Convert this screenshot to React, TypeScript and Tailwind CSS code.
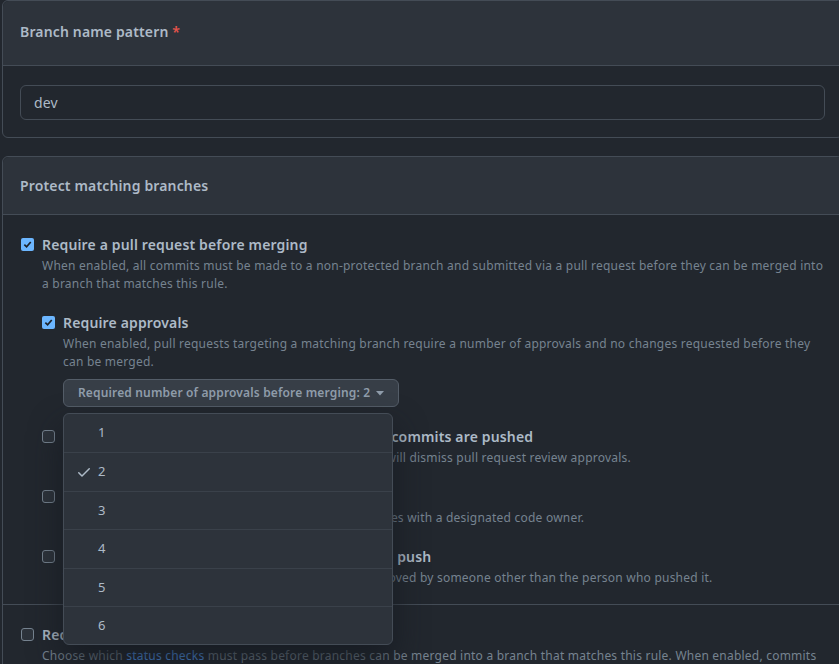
import React from 'react';

const font = { fontFamily: '"Segoe UI", "Noto Sans", "Liberation Sans", sans-serif' };

const Check = ({ size = 16, className = '' }: { size?: number; className?: string }) => (
  <svg width={size} height={size} viewBox="0 0 16 16" className={className} fill="currentColor">
    <path d="M13.78 4.22a.75.75 0 0 1 0 1.06l-7.25 7.25a.75.75 0 0 1-1.06 0L2.22 9.28a.751.751 0 0 1 .018-1.042.751.751 0 0 1 1.042-.018L6 10.94l6.72-6.72a.75.75 0 0 1 1.06 0Z" />
  </svg>
);

const Box = ({ checked }: { checked?: boolean }) =>
  checked ? (
    <span className="mt-[4px] flex h-[13px] w-[13px] shrink-0 items-center justify-center rounded-[2px] bg-[#6cb6ff] text-[#1c2128]">
      <svg width="9" height="9" viewBox="0 0 10 10" fill="none">
        <path d="M1.5 5.2 4 7.6 8.6 2.2" stroke="currentColor" strokeWidth="1.9" />
      </svg>
    </span>
  ) : (
    <span className="mt-[4px] h-[13px] w-[13px] shrink-0 rounded-[3px] border border-[#768390] bg-[#2d333b]" />
  );

interface OptionProps {
  title: string;
  desc: React.ReactNode;
  checked?: boolean;
  children?: React.ReactNode;
}

const Option = ({ title, desc, checked, children }: OptionProps) => (
  <div className="flex gap-[8px]">
    <Box checked={checked} />
    <div className="min-w-0 flex-1">
      <div className="text-[14px] font-semibold leading-[21px] text-[#adbac7]">{title}</div>
      <p className="mt-[2px] text-[12px] leading-[18px] tracking-[0.22px] text-[#768390]">{desc}</p>
      {children}
    </div>
  </div>
);

const counts = [1, 2, 3, 4, 5, 6];

export default function App() {
  return (
    <div className="h-[664px] w-[839px] overflow-hidden bg-[#22272e] tracking-[0.15px]" style={font}>
      <div className="w-[843px] pl-[2px]">
        <section className="rounded-[6px] border border-[#444c56]">
          <div className="h-[65px] rounded-t-[6px] border-b border-[#444c56] bg-[#2d333b] px-[17px] pt-[20px]">
            <h2 className="text-[14px] font-semibold leading-[21px] text-[#adbac7]">
              Branch name pattern <span className="text-[#e5534b]">*</span>
            </h2>
          </div>
          <div className="px-[17px] pb-[17px] pt-[19px]">
            <div className="flex h-[35px] items-center rounded-[6px] border border-[#444c56] px-[13px] text-[14px] text-[#adbac7]">
              dev
            </div>
          </div>
        </section>

        <section className="mt-[18px] rounded-[6px] border border-[#444c56]">
          <div className="flex h-[58px] items-center rounded-t-[6px] border-b border-[#444c56] bg-[#2d333b] px-[17px]">
            <h2 className="text-[14px] font-semibold text-[#adbac7]">Protect matching branches</h2>
          </div>

          <div className="border-b border-[#444c56] px-[18px] pb-[17px] pt-[19px]">
            <Option
              checked
              title="Require a pull request before merging"
              desc="When enabled, all commits must be made to a non-protected branch and submitted via a pull request before they can be merged into a branch that matches this rule."
            >
              <div className="mt-[19px] flex flex-col gap-[19px]">
                <Option
                  checked
                  title="Require approvals"
                  desc="When enabled, pull requests targeting a matching branch require a number of approvals and no changes requested before they can be merged."
                >
                  <div className="relative mt-[8px]">
                    <button className="flex h-[28px] items-center gap-[6px] rounded-[6px] border border-[#545d68] bg-[#373e47] px-[14px] text-[12px] font-semibold text-[#909dab]">
                      Required number of approvals before merging: 2
                      <svg width="8" height="5" viewBox="0 0 8 5" fill="currentColor">
                        <path d="M0 0h8L4 4.5z" />
                      </svg>
                    </button>
                    <ul className="absolute left-0 top-[34px] z-10 w-[330px] overflow-hidden rounded-[6px] border border-[#444c56] bg-[#2d333b] shadow-[0_16px_32px_rgba(22,27,34,0.85)]">
                      {counts.map((n, i) => (
                        <li
                          key={n}
                          className={`flex h-[38.4px] items-center gap-[6px] px-[12px] text-[13px] text-[#adbac7] ${i > 0 ? 'border-t border-[#3a414a]' : ''}`}
                        >
                          <span className="flex w-[16px] justify-center">
                            {n === 2 && <Check size={16} className="text-[#adbac7]" />}
                          </span>
                          {n}
                        </li>
                      ))}
                    </ul>
                  </div>
                </Option>
                <Option
                  title="Dismiss stale pull request approvals when new commits are pushed"
                  desc="New reviewable commits pushed to a matching branch will dismiss pull request review approvals."
                />
                <Option
                  title="Require review from Code Owners"
                  desc="Require an approved review in pull requests including files with a designated code owner."
                />
                <Option
                  title="Require approval of the most recent reviewable push"
                  desc="Whether the most recent reviewable push must be approved by someone other than the person who pushed it."
                />
              </div>
            </Option>
          </div>

          <div className="px-[18px] pt-[19px]">
            <Option
              title="Require status checks to pass before merging"
              desc={
                <>
                  Choose which <span className="text-[#539bf5]">status checks</span> must pass before branches can be
                  merged into a branch that matches this rule. When enabled, commits must first be pushed to another
                  branch, then merged or pushed directly to a branch that matches this rule after status checks have
                  passed.
                </>
              }
            />
          </div>
        </section>
      </div>
    </div>
  );
}
